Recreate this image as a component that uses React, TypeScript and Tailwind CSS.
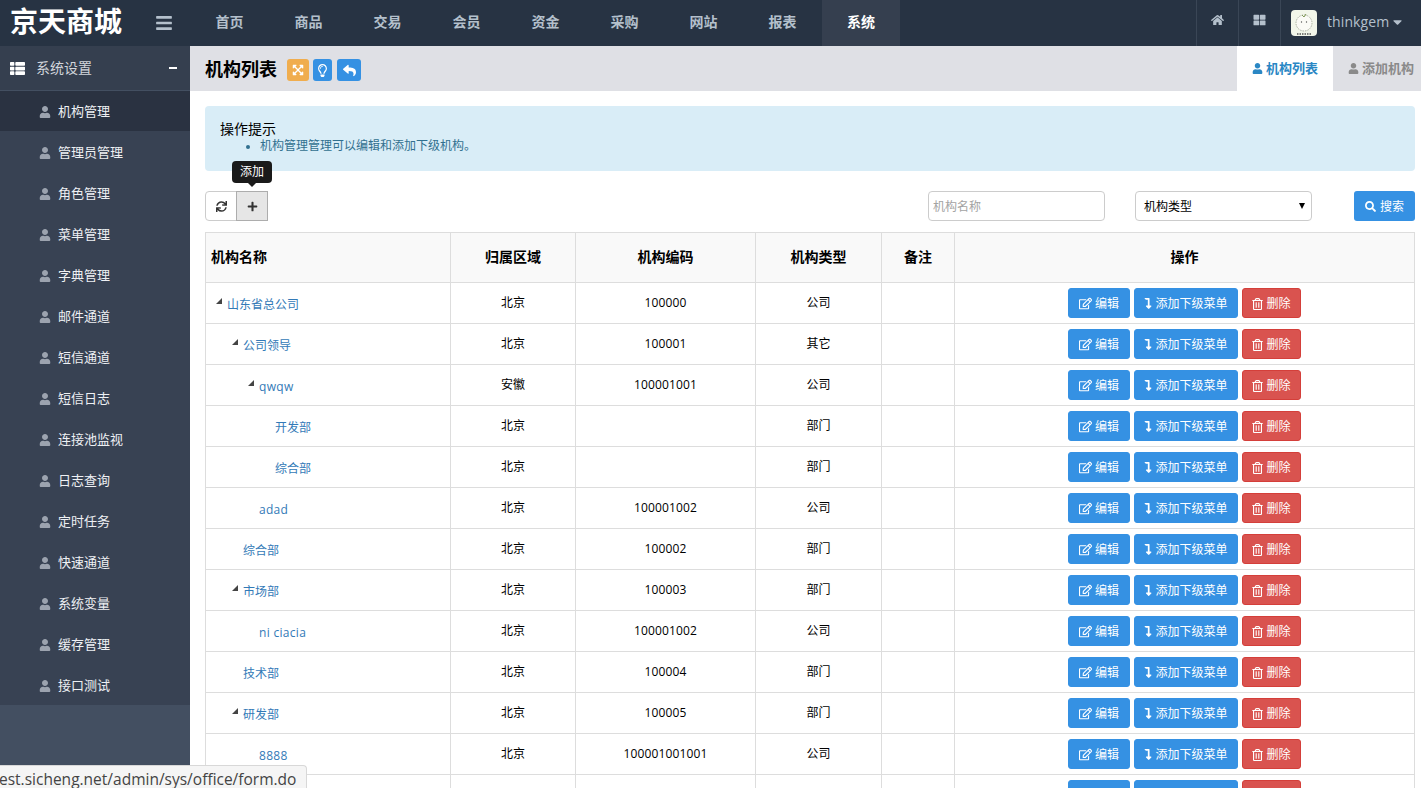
import React from "react";
import {
  FaBars, FaHome, FaThLarge, FaCaretDown, FaThList, FaUser, FaExpandArrowsAlt, FaRegLightbulb, FaReply,
  FaSync, FaPlus, FaSearch, FaRegEdit, FaLevelDownAlt, FaRegTrashAlt,
} from "react-icons/fa";

const font = "font-['Liberation_Sans','Noto_Sans_CJK_SC',sans-serif]";
const latin = "font-['Open_Sans','Noto_Sans_CJK_SC',sans-serif]";
const nav = ["首页", "商品", "交易", "会员", "资金", "采购", "网站", "报表", "系统"];
const menu = ["机构管理", "管理员管理", "角色管理", "菜单管理", "字典管理", "邮件通道", "短信通道", "短信日志", "连接池监视", "日志查询", "定时任务", "快速通道", "系统变量", "缓存管理", "接口测试"];
type Row = [string, number, boolean, string, string, string];
const rows: Row[] = [
  ["山东省总公司", 0, true, "北京", "100000", "公司"],
  ["公司领导", 1, true, "北京", "100001", "其它"],
  ["qwqw", 2, true, "安徽", "100001001", "公司"],
  ["开发部", 3, false, "北京", "", "部门"],
  ["综合部", 3, false, "北京", "", "部门"],
  ["adad", 2, false, "北京", "100001002", "公司"],
  ["综合部", 1, false, "北京", "100002", "部门"],
  ["市场部", 1, true, "北京", "100003", "部门"],
  ["ni ciacia", 2, false, "北京", "100001002", "公司"],
  ["技术部", 1, false, "北京", "100004", "部门"],
  ["研发部", 1, true, "北京", "100005", "部门"],
  ["8888", 2, false, "北京", "100001001001", "公司"],
  ["", 0, false, "", "", ""],
];
const indents = ["pl-[21px]", "pl-[37px]", "pl-[53px]", "pl-[69px]"];

function Avatar() {
  return (
    <svg width="26" height="26" viewBox="0 0 26 26" className="shrink-0 rounded-sm">
      <rect width="26" height="26" fill="#f2f6ea" />
      <circle cx="13" cy="13" r="8" fill="#fbfbf6" stroke="#8d9384" strokeWidth="0.7" strokeDasharray="1.5 1" />
      <path d="M11 5l2 2 2-3" fill="none" stroke="#7f9a55" strokeWidth="1" />
      <circle cx="10.5" cy="12" r="0.7" fill="#555" />
      <circle cx="15.5" cy="12" r="0.7" fill="#555" />
      <path d="M6 24h14" stroke="#555" strokeWidth="1.4" strokeDasharray="1.5 1" />
    </svg>
  );
}

function ActionBtn({ color, children }: { color: string; children?: React.ReactNode }) {
  return (
    <span className={`flex h-[30px] items-center justify-center gap-[3px] rounded-[3px] border pt-[1px] text-[12px] text-white ${color}`}>
      {children}
    </span>
  );
}

export default function App() {
  return (
    <div className={`${font} relative flex h-[788px] w-[1421px] flex-col overflow-hidden bg-white text-[13px] text-black`}>
      <header className="flex h-[46px] shrink-0 items-center bg-[#273343]">
        <div className="w-[155px] pl-[10px] text-[28px] font-bold leading-[42px] text-white">京天商城</div>
        <FaBars className="h-[18px] w-[18px] text-[#b4c0cc]" />
        <nav className="ml-[17px] flex h-full">
          {nav.map((n, i) => (
            <span
              key={n}
              className={`flex h-full items-center justify-center pb-[2px] text-[14px] font-bold ${i === 8 ? "w-[78px] bg-[#353f4f] text-white" : "w-[79px] text-[#b4c0cc]"}`}
            >
              {n}
            </span>
          ))}
        </nav>
        <div className="ml-auto flex h-full text-[#b4c0cc]">
          <span className="flex w-[42px] items-center justify-center border-l border-[#3a4656] pb-[6px]"><FaHome className="h-[12px] w-[13px]" /></span>
          <span className="flex w-[42px] items-center justify-center border-l border-[#3a4656] pb-[6px]"><FaThLarge className="h-[12px] w-[13px]" /></span>
          <span className="flex w-[141px] items-center gap-[10px] border-l border-[#3a4656] pl-[10px]">
            <Avatar />
            <span className={`${latin} flex items-center gap-[4px] pb-[3px] text-[14px] tracking-[0.1px]`}>thinkgem<FaCaretDown className="h-[14px] w-[9px]" /></span>
          </span>
        </div>
      </header>

      <div className="flex min-h-0 flex-1">
        <aside className="flex w-[190px] shrink-0 flex-col bg-[#434f61]">
          <div className="flex h-[44px] shrink-0 items-center bg-[#353f4f] pl-[9px] pr-[13px] text-[14px] text-[#d1d5db]">
            <FaThList className="h-[15px] w-[17px] text-white" />
            <span className="ml-[10px] flex-1">系统设置</span>
            <span className="h-[2px] w-[8px] bg-white" />
          </div>
          <div>
            {menu.map((m, i) => (
              <div key={m} className={`flex h-[41px] items-center gap-[7px] pl-[39px] text-[#eef0f3] ${i === 0 ? "border-t border-[#434f61] bg-[#2a3241] pt-[2px]" : "bg-[#384253] pt-[3px]"}`}>
                <FaUser className="h-[12px] w-[12px] text-[#9ca3af]" />
                {m}
              </div>
            ))}
          </div>
        </aside>

        <main className="min-w-0 flex-1">
          <div className="flex h-[45px] bg-[#dfe0e5] pl-[15px]">
            <div className="flex items-center pt-[3px]">
              <h1 className="mr-[10px] text-[18px] font-bold">机构列表</h1>
              <span className="mr-[4px] flex h-[22px] w-[22px] items-center justify-center rounded-[3px] bg-[#f0ad4e] text-white"><FaExpandArrowsAlt className="h-[12px] w-[12px]" /></span>
              <span className="mr-[5px] flex h-[22px] w-[19px] items-center justify-center rounded-[3px] bg-[#3591e3] text-white"><FaRegLightbulb className="h-[13px] w-[13px]" /></span>
              <span className="flex h-[22px] w-[24px] items-center justify-center rounded-[3px] bg-[#3591e3] text-white"><FaReply className="h-[13px] w-[13px]" /></span>
            </div>
            <div className="ml-auto flex h-full">
              <span className="flex w-[96px] items-center justify-center gap-[3px] bg-white font-bold text-[#2a87c4]"><FaUser className="h-[11px] w-[11px]" />机构列表</span>
              <span className="flex w-[88px] items-center gap-[3px] pl-[15px] font-bold text-[#8a8a8a]"><FaUser className="h-[11px] w-[11px] shrink-0" /><span className="whitespace-nowrap">添加机构</span></span>
            </div>
          </div>

          <div className="pl-[15px] pr-[6px] pt-[15px]">
            <div className="h-[65px] rounded-[4px] bg-[#d9edf7] pl-[15px] pt-[14px]">
              <div className="text-[14px] leading-[18px]">操作提示</div>
              <ul className="list-disc pl-[40px] text-[12px] leading-[16px] text-[#31708f]">
                <li>机构管理管理可以编辑和添加下级机构。</li>
              </ul>
            </div>

            <div className="mt-[20px] flex h-[30px] items-stretch">
              <div className="relative flex">
                <span className="flex w-[32px] items-center justify-center rounded-l-[4px] border border-[#ccc] text-[#333]"><FaSync className="h-[11px] w-[11px]" /></span>
                <span className="-ml-px flex w-[32px] items-center justify-center border border-[#adadad] bg-[#e6e6e6] text-[#333]"><FaPlus className="h-[11px] w-[11px]" /></span>
                <div className="absolute -top-[30px] left-[27px] flex h-[22px] w-[40px] items-center justify-center rounded-[4px] bg-[#1a1a1a] text-[12px] text-white">
                  添加
                  <span className="absolute -bottom-[4px] left-1/2 -ml-[4px] border-x-[4px] border-t-[4px] border-x-transparent border-t-[#1a1a1a]" />
                </div>
              </div>
              <input placeholder="机构名称" readOnly className="ml-[660px] h-[30px] w-[177px] rounded-[4px] border border-[#ccc] pl-[4px] pt-[1px] text-[12px] outline-none placeholder:text-[#a3a3a3]" />
              <div className="relative ml-[30px] flex h-[30px] w-[177px] items-center rounded-[4px] border border-[#ccc] pl-[8px] pt-[2px] text-[12px]">
                机构类型
                <span className="absolute right-[6px] top-[11px] border-x-[3.5px] border-t-[6px] border-x-transparent border-t-black" />
              </div>
              <span className="ml-[42px] flex w-[61px] items-center justify-center gap-[4px] rounded-[3px] bg-[#3591e3] pt-[1px] text-[12px] text-white"><FaSearch className="h-[11px] w-[11px]" />搜索</span>
            </div>

            <table className="mt-[11px] w-[1210px] table-fixed border-collapse border border-[#ddd]">
              <colgroup>
                <col className="w-[245px]" /><col className="w-[125px]" /><col className="w-[180px]" /><col className="w-[126px]" /><col className="w-[73px]" /><col />
              </colgroup>
              <thead>
                <tr className="h-[50px] bg-[#f9f9f9] text-[14px] font-bold">
                  <th className="border border-[#ddd] pl-[5px] text-left">机构名称</th>
                  <th className="border border-[#ddd]">归属区域</th>
                  <th className="border border-[#ddd]">机构编码</th>
                  <th className="border border-[#ddd]">机构类型</th>
                  <th className="border border-[#ddd]">备注</th>
                  <th className="border border-[#ddd]">操作</th>
                </tr>
              </thead>
              <tbody>
                {rows.map((r, i) => (
                  <tr key={i} className="h-[41px] text-center text-[12px]">
                    <td className={`relative border border-[#ddd] text-left text-[#337ab7] ${indents[r[1]]}`}>
                      <span className={`relative top-[2px] inline-flex items-center text-[12px] ${latin} ${r[0].charCodeAt(0) < 128 ? "tracking-[0.3px]" : ""}`}>
                        {r[2] && <span className="absolute -left-[11px] top-[2px] h-0 w-0 border-b-[6px] border-l-[6px] border-b-[#444] border-l-transparent" />}
                        {r[0]}
                      </span>
                    </td>
                    <td className="border border-[#ddd]">{r[3]}</td>
                    <td className={`border border-[#ddd] tracking-[0.15px] ${latin}`}>{r[4]}</td>
                    <td className="border border-[#ddd]">{r[5]}</td>
                    <td className="border border-[#ddd]" />
                    <td className="border border-[#ddd]">
                      <div className="flex justify-center gap-[4px]">
                        <span className="w-[62px]"><ActionBtn color="border-[#3591e3] bg-[#3591e3]">{i < 12 && <><FaRegEdit className="h-[13px] w-[13px]" />编辑</>}</ActionBtn></span>
                        <span className="w-[104px]"><ActionBtn color="border-[#3591e3] bg-[#3591e3]">{i < 12 && <><FaLevelDownAlt className="h-[11px] w-[8px]" />添加下级菜单</>}</ActionBtn></span>
                        <span className="w-[59px]"><ActionBtn color="border-[#d43f3a] bg-[#d9534f]">{i < 12 && <><FaRegTrashAlt className="h-[12px] w-[11px]" />删除</>}</ActionBtn></span>
                      </div>
                    </td>
                  </tr>
                ))}
              </tbody>
            </table>
          </div>
        </main>
      </div>

      <div className="absolute bottom-0 left-0 h-[23px] w-[307px] overflow-hidden rounded-tr-[4px] border-r border-t border-[#d8d8d8] bg-[#f5f5f5]">
        <div className="-ml-[1px] whitespace-nowrap font-['Open_Sans',sans-serif] text-[15.5px] leading-[27px] text-[#444]">est.sicheng.net/admin/sys/office/form.do</div>
      </div>
    </div>
  );
}
